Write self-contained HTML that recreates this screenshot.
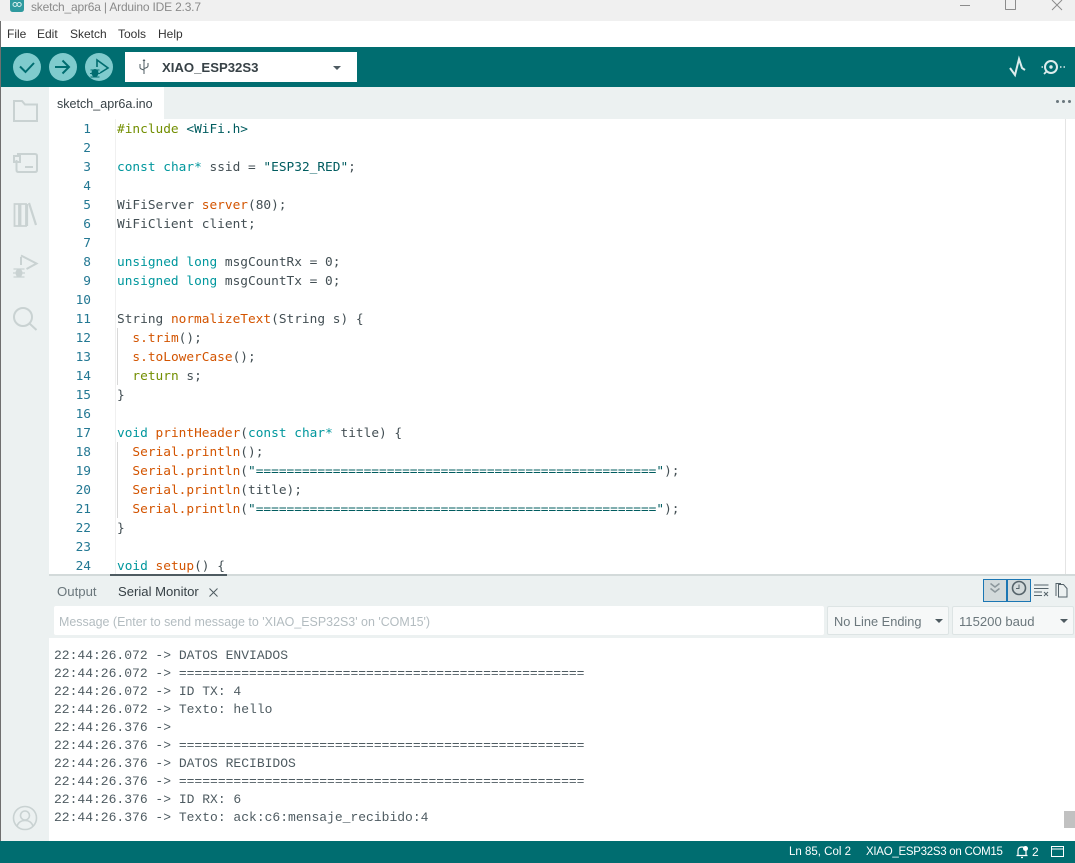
<!DOCTYPE html>
<html>
<head>
<meta charset="utf-8">
<style>
html,body{margin:0;padding:0;background:#fff}
body{width:1075px;height:863px;position:relative;overflow:hidden;font-family:"Liberation Sans",sans-serif;color:#4e5b61}
.a{position:absolute}
.t{position:absolute;white-space:nowrap;font-size:13px;line-height:18px}
pre{margin:0;position:absolute;font-family:"DejaVu Sans Mono",monospace;font-size:12.8px;line-height:19px;color:#434f54}
.k{color:#00979d}.o{color:#d35400}.g{color:#728e00}.s{color:#005c5f}
#nums{left:60px;top:120px;width:31px;text-align:right;color:#237893}
#code{left:117px;top:120px}
#serial{left:54px;top:647px;font-family:"Liberation Mono",monospace;font-size:13px;line-height:18px;color:#4e5b61}
</style>
</head>
<body>
<!-- title bar -->
<div class="a" style="left:0;top:0;width:1075px;height:21px;background:#f0f0f0"></div>
<svg class="a" style="left:10px;top:0" width="15" height="12" viewBox="0 0 15 12"><path d="M0 0H14V9Q14 12 11 12H3Q0 12 0 9Z" fill="#2f9a9f"/><circle cx="5" cy="4.5" r="2" fill="none" stroke="#d8f0f0" stroke-width="1"/><circle cx="9.2" cy="4.5" r="2" fill="none" stroke="#d8f0f0" stroke-width="1"/></svg>
<div class="t" style="left:31px;top:-2px;color:#8a8a8a;font-size:12px;letter-spacing:-.19px">sketch_apr6a | Arduino IDE 2.3.7</div>
<div class="a" style="left:960px;top:5px;width:10px;height:1px;background:#8c8c8c"></div>
<div class="a" style="left:1005px;top:0;width:9px;height:9px;border:1px solid #8c8c8c;border-top:none;border-radius:0 0 1px 1px"></div>
<svg class="a" style="left:1051px;top:0" width="12" height="11"><path d="M1 0L11 10M11 0L1 10" stroke="#8c8c8c" stroke-width="1" fill="none"/></svg>
<!-- menu -->
<div class="t" style="left:7px;top:25px;font-size:12px;color:#333">File</div>
<div class="t" style="left:37px;top:25px;font-size:12px;color:#333">Edit</div>
<div class="t" style="left:70px;top:25px;font-size:12px;color:#333">Sketch</div>
<div class="t" style="left:118px;top:25px;font-size:12px;color:#333">Tools</div>
<div class="t" style="left:158px;top:25px;font-size:12px;color:#333">Help</div>
<!-- toolbar -->
<div class="a" style="left:0;top:47px;width:1075px;height:40px;background:#006d70"></div>
<svg class="a" style="left:0;top:47px" width="125" height="40" viewBox="0 0 125 40">
<circle cx="27" cy="20" r="14" fill="#7fcbcd"/>
<path d="M20 19.5L25.5 25L34 16" fill="none" stroke="#006d70" stroke-width="2"/>
<circle cx="63" cy="20" r="14" fill="#7fcbcd"/>
<path d="M55 20H68.500M62.500 13.500L69 20L62.500 26.500" fill="none" stroke="#006d70" stroke-width="2"/>
<circle cx="99" cy="20" r="14" fill="#7fcbcd"/>
<path d="M97 20V13L108 21L100 26" fill="none" stroke="#006d70" stroke-width="1.600"/>
<ellipse cx="95" cy="26" rx="3.500" ry="4" fill="#006d70"/>
<path d="M90.500 23L99.500 23M90 26.500H100M90.500 30L99.500 30" stroke="#006d70" stroke-width="1"/>
</svg>
<div class="a" style="left:125px;top:52px;width:232px;height:30px;background:#fff"></div>
<svg class="a" style="left:138px;top:59px" width="12" height="16" viewBox="0 0 12 16"><path d="M6 1V15M2 5V8.500Q2 10 6 11M10 4V7Q10 8.500 6 9.500" fill="none" stroke="#4e5b61" stroke-width="1"/><path d="M6 0L7.500 2H4.500Z" fill="#4e5b61"/></svg>
<div class="t" style="left:162px;top:59px;font-weight:bold;font-size:13.150px;color:#374146">XIAO_ESP32S3</div>
<div class="a" style="left:333px;top:66px;width:0;height:0;border-left:4px solid transparent;border-right:4px solid transparent;border-top:4px solid #4e5b61"></div>
<svg class="a" style="left:1005px;top:55px" width="62" height="24" viewBox="0 0 62 24">
<path d="M5 13L10 20L14 4L17 13L20 15" fill="none" stroke="#dcecec" stroke-width="2"/>
<circle cx="46" cy="12" r="6" fill="none" stroke="#dcecec" stroke-width="2"/><circle cx="46" cy="12" r="1.700" fill="#dcecec"/>
<path d="M41.500 16.500L39 19" stroke="#dcecec" stroke-width="1.800"/>
<path d="M36.500 12H38M55 12H56.500M58.500 12H60" stroke="#dcecec" stroke-width="1.500"/>
</svg>
<!-- side panel -->
<div class="a" style="left:0;top:87px;width:49px;height:754px;background:#ecf1f1"></div>
<div class="a" style="left:0;top:21px;width:1px;height:842px;background:#6f6f6f"></div>
<svg class="a" style="left:0;top:90px" width="49" height="250" viewBox="0 0 49 250" fill="none" stroke="#c9d2d2" stroke-width="2">
<path d="M14 31V11H22L25 14.500H37V31Z"/>
<path d="M16.500 70V80Q16.500 82 18.500 82H35Q37 82 37 80V66Q37 64 35 64H18V66"/><path d="M14 66H20V72H14Z" /><path d="M25 77H33"/>
<path d="M14.500 114V136H19V114ZM20.500 114V136H26V114Z" stroke-width="1.800"/><path d="M27 114L27 136M29 113L36 135" stroke-width="2.200"/>
<path d="M21 167V175M21 165.500L36.500 173.500L26.500 179"/>
<ellipse cx="19" cy="183" rx="3.500" ry="4.500" fill="#c9d2d2" stroke="none"/><path d="M13.500 179L24.500 179M13 183H25M13.500 187L24.500 187" stroke-width="1.300"/>
<circle cx="23" cy="227" r="9"/><path d="M29.500 233.500L36.500 240"/>
</svg>
<svg class="a" style="left:12px;top:805px" width="26" height="26" viewBox="0 0 26 26" fill="none" stroke="#c9d2d2" stroke-width="1.600"><circle cx="13" cy="13" r="11.500"/><circle cx="13" cy="10.500" r="4.500"/><path d="M5 21Q7 15.500 13 15.500Q19 15.500 21 21"/></svg>
<!-- tab bar -->
<div class="a" style="left:49px;top:87px;width:1026px;height:32px;background:#ecf1f1"></div>
<div class="a" style="left:49px;top:87px;width:115px;height:32px;background:#fff"></div>
<div class="t" style="left:57px;top:95px;color:#374146;font-size:12.550px">sketch_apr6a.ino</div>
<div class="a" style="left:1056px;top:100px;width:2.500px;height:2.500px;border-radius:2px;background:#6a777d;box-shadow:6px 0 0 #6a777d,12px 0 0 #6a777d"></div>
<!-- editor -->
<div class="a" style="left:115px;top:119px;width:1px;height:455px;background:#f0f0f0"></div>
<div class="a" style="left:117px;top:328px;width:1px;height:57px;background:#d8d8d8"></div>
<div class="a" style="left:117px;top:442px;width:1px;height:76px;background:#d8d8d8"></div>
<div class="a" style="left:1065px;top:119px;width:1px;height:455px;background:#e4e4e4"></div>
<pre id="nums">1
2
3
4
5
6
7
8
9
10
11
12
13
14
15
16
17
18
19
20
21
22
23
24</pre>
<pre id="code"><span class="g">#include</span> <span class="s">&lt;WiFi.h&gt;</span>

<span class="k">const</span> <span class="k">char*</span> ssid = <span class="s">"ESP32_RED"</span>;

WiFiServer <span class="o">server</span>(80);
WiFiClient client;

<span class="k">unsigned</span> <span class="k">long</span> msgCountRx = 0;
<span class="k">unsigned</span> <span class="k">long</span> msgCountTx = 0;

String <span class="o">normalizeText</span>(String s) {
  <span class="o">s.trim</span>();
  <span class="o">s.toLowerCase</span>();
  <span class="g">return</span> s;
}

<span class="k">void</span> <span class="o">printHeader</span>(<span class="k">const</span> <span class="k">char*</span> title) {
  <span class="o">Serial.println</span>();
  <span class="o">Serial.println</span>(<span class="s">"===================================================="</span>);
  <span class="o">Serial.println</span>(title);
  <span class="o">Serial.println</span>(<span class="s">"===================================================="</span>);
}

<span class="k">void</span> <span class="o">setup</span>() {</pre>
<!-- bottom panel -->
<div class="a" style="left:49px;top:575px;width:1026px;height:63px;background:#ecf1f1"></div>
<div class="a" style="left:49px;top:574px;width:1026px;height:2px;background:#d3dada"></div>
<div class="a" style="left:110px;top:574px;width:117px;height:2px;background:#4e5b61"></div>
<div class="t" style="left:57px;top:583px;font-size:13.200px;color:#6b777c">Output</div>
<div class="t" style="left:118px;top:583px;font-size:13.100px;color:#374146">Serial Monitor</div>
<svg class="a" style="left:208px;top:587px" width="11" height="11"><path d="M1.500 1.500L9.500 9.500M9.500 1.500L1.500 9.500" stroke="#4e5b61" stroke-width="1"/></svg>
<!-- serial toolbar icons -->
<div class="a" style="left:983px;top:579px;width:22px;height:21px;background:#d3dadb;border:1px solid #1b76b3"></div>
<div class="a" style="left:1007px;top:579px;width:22px;height:21px;background:#d3dadb;border:1px solid #1b76b3"></div>
<svg class="a" style="left:983px;top:579px" width="92" height="24" viewBox="0 0 92 24" fill="none">
<path d="M7.500 4.500L12 8L16.500 4.500M7.500 9.500L12 13L16.500 9.500" stroke="#8c979c" stroke-width="1.500"/>
<circle cx="36" cy="9" r="6.500" stroke="#55636a" stroke-width="1.600"/><path d="M36 5.500V9.500H33" stroke="#55636a" stroke-width="1"/>
<path d="M51 6H65.500M51 9.500H65.500M51 13H59M51 16.500H59" stroke="#55636a" stroke-width="1"/><path d="M61 13L65 17M65 13L61 17" stroke="#55636a" stroke-width="1"/>
<path d="M73 17V4.500H78" stroke="#55636a" stroke-width="1"/><path d="M75.500 18V5.500H80.500L84 9.500V18Z" stroke="#55636a" stroke-width="1"/>
</svg>
<!-- message + selects -->
<div class="a" style="left:54px;top:606px;width:770px;height:29px;background:#fff;border-radius:2px"></div>
<div class="t" style="left:59px;top:613px;font-size:12.450px;color:#b3bcc0">Message (Enter to send message to 'XIAO_ESP32S3' on 'COM15')</div>
<div class="a" style="left:827px;top:606px;width:120px;height:27px;background:#f6f8f8;border:1px solid #dde4e4;border-radius:2px"></div>
<div class="t" style="left:834px;top:613px;font-size:12.800px;color:#6b777c">No Line Ending</div>
<div class="a" style="left:935px;top:619px;width:0;height:0;border-left:4px solid transparent;border-right:4px solid transparent;border-top:4px solid #4e5b61"></div>
<div class="a" style="left:952px;top:606px;width:120px;height:27px;background:#f6f8f8;border:1px solid #dde4e4;border-radius:2px"></div>
<div class="t" style="left:959px;top:613px;font-size:13.100px;color:#6b777c">115200 baud</div>
<div class="a" style="left:1060px;top:619px;width:0;height:0;border-left:4px solid transparent;border-right:4px solid transparent;border-top:4px solid #4e5b61"></div>
<!-- serial output -->
<pre id="serial">22:44:26.072 -&gt; DATOS ENVIADOS
22:44:26.072 -&gt; ====================================================
22:44:26.072 -&gt; ID TX: 4
22:44:26.072 -&gt; Texto: hello
22:44:26.376 -&gt; 
22:44:26.376 -&gt; ====================================================
22:44:26.376 -&gt; DATOS RECIBIDOS
22:44:26.376 -&gt; ====================================================
22:44:26.376 -&gt; ID RX: 6
22:44:26.376 -&gt; Texto: ack:c6:mensaje_recibido:4</pre>
<div class="a" style="left:1064px;top:811px;width:11px;height:17px;background:#c1c1c1"></div>
<!-- status bar -->
<div class="a" style="left:0;top:841px;width:1075px;height:22px;background:#006d70"></div>
<div class="t" style="left:789px;top:843px;font-size:11.500px;color:#fff">Ln 85, Col 2</div>
<div class="t" style="left:866px;top:843px;font-size:11.500px;letter-spacing:-.28px;color:#fff">XIAO_ESP32S3 on COM15</div>
<svg class="a" style="left:1015px;top:845px" width="15" height="14" viewBox="0 0 15 14" fill="none"><path d="M1.500 10.500H12.500M3 10.500V6Q3 2 7 2Q11 2 11 6V10.500M6 12.500H8" stroke="#fff" stroke-width="1.200"/><circle cx="10.500" cy="3.500" r="2.500" fill="#fff"/></svg>
<div class="t" style="left:1032px;top:843px;font-size:12px;color:#fff">2</div>
<svg class="a" style="left:1051px;top:846px" width="13" height="11" viewBox="0 0 13 11" fill="none"><rect x=".5" y=".5" width="12" height="10" stroke="#fff"/><path d="M1 3H12" stroke="#fff"/></svg>
</body>
</html>
